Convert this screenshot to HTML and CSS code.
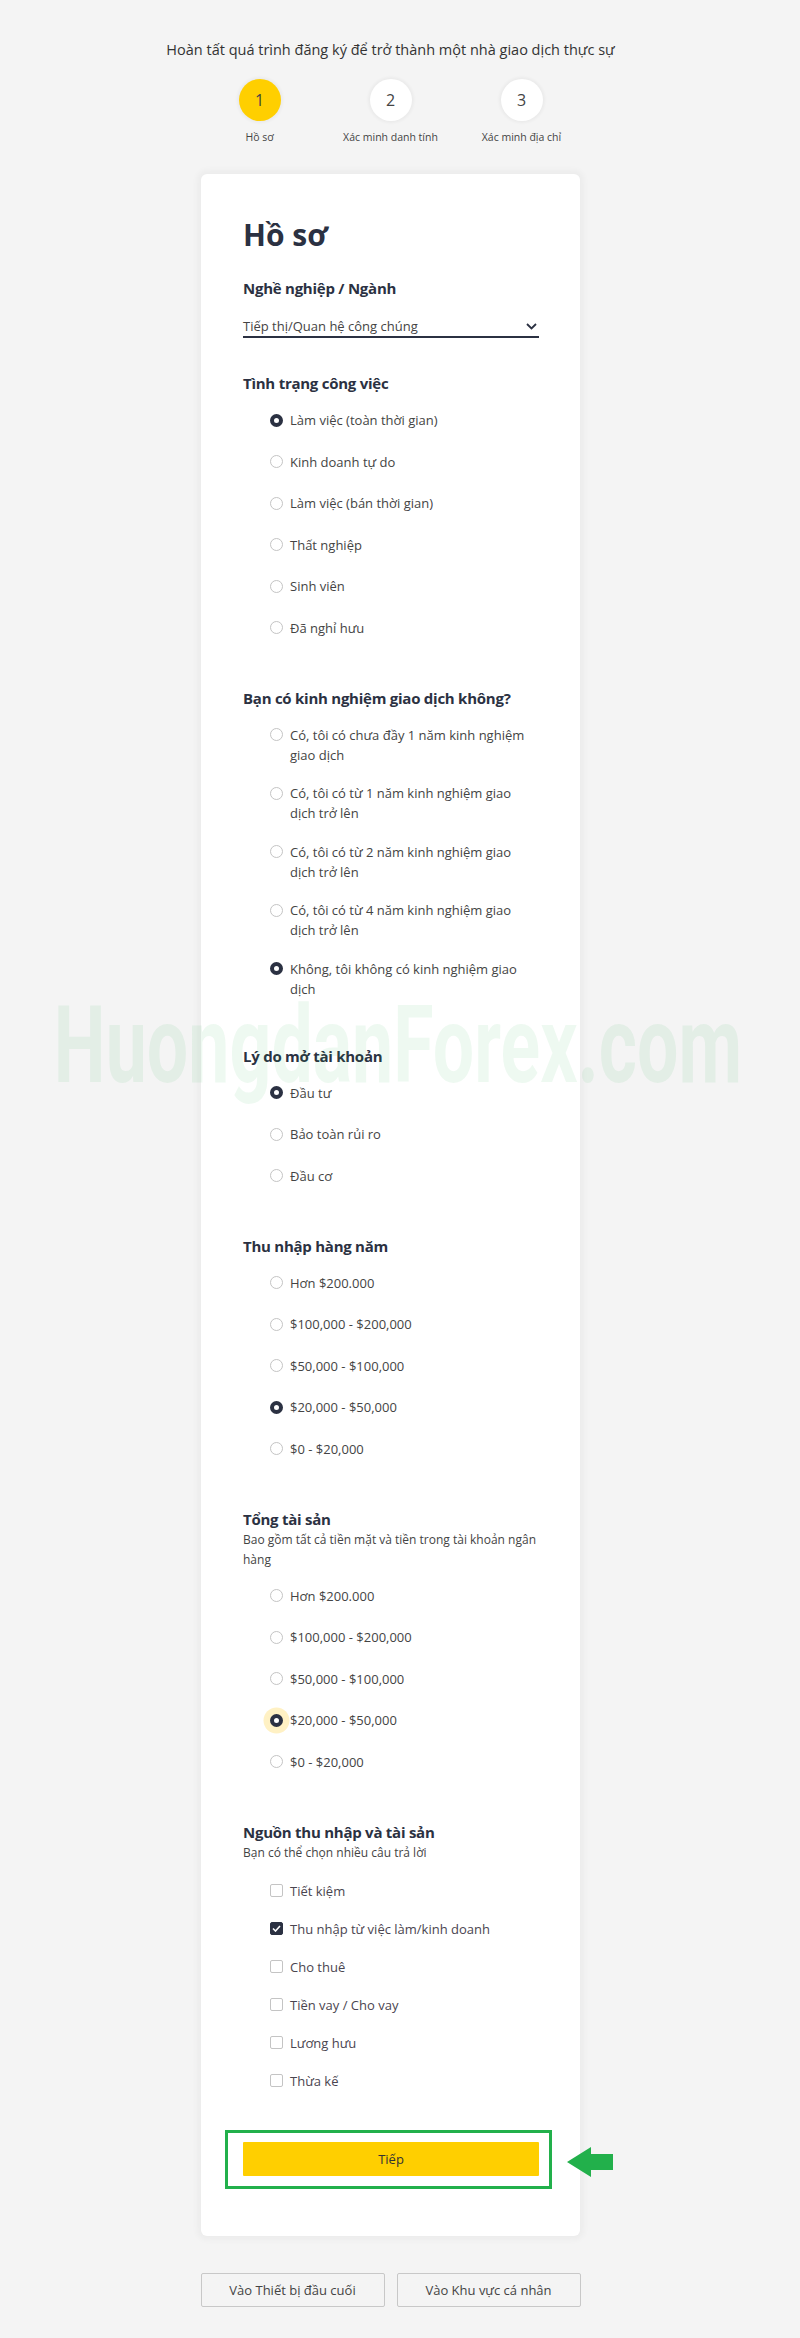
FILE: index.html
```html
<!DOCTYPE html>
<html>
  <head>
    <title>Hồ sơ</title>
    <meta name="viewport" content="width=device-width, initial-scale=1.0">
    <link rel="stylesheet" href="styles.css">
  </head>
  <body>
    <div class="page">
      <p class="intro">Hoàn tất quá trình đăng ký để trở thành một nhà giao dịch thực sự</p>

      <div class="steps">
        <div class="step active">
          <span class="step-num">1</span>
          <span class="step-label">Hồ sơ</span>
        </div>
        <div class="step">
          <span class="step-num">2</span>
          <span class="step-label">Xác minh danh tính</span>
        </div>
        <div class="step">
          <span class="step-num">3</span>
          <span class="step-label">Xác minh địa chỉ</span>
        </div>
      </div>

      <div class="card">
        <h1>Hồ sơ</h1>

        <div class="field first">
          <h2>Nghề nghiệp / Ngành</h2>
          <div class="select">
            <span>Tiếp thị/Quan hệ công chúng</span>
            <svg width="11" height="7" viewBox="0 0 11 7"><polyline points="1,1 5.5,5.5 10,1" fill="none" stroke="#2b3142" stroke-width="1.8"/></svg>
          </div>
        </div>

        <div class="field">
          <h2>Tình trạng công việc</h2>
          <div class="options">
            <div class="option"><span class="radio checked"></span><span>Làm việc (toàn thời gian)</span></div>
            <div class="option"><span class="radio"></span><span>Kinh doanh tự do</span></div>
            <div class="option"><span class="radio"></span><span>Làm việc (bán thời gian)</span></div>
            <div class="option"><span class="radio"></span><span>Thất nghiệp</span></div>
            <div class="option"><span class="radio"></span><span>Sinh viên</span></div>
            <div class="option"><span class="radio"></span><span>Đã nghỉ hưu</span></div>
          </div>
        </div>

        <div class="field">
          <h2>Bạn có kinh nghiệm giao dịch không?</h2>
          <div class="options">
            <div class="option"><span class="radio"></span><span>Có, tôi có chưa đầy 1 năm kinh nghiệm giao dịch</span></div>
            <div class="option"><span class="radio"></span><span>Có, tôi có từ 1 năm kinh nghiệm giao dịch trở lên</span></div>
            <div class="option"><span class="radio"></span><span>Có, tôi có từ 2 năm kinh nghiệm giao dịch trở lên</span></div>
            <div class="option"><span class="radio"></span><span>Có, tôi có từ 4 năm kinh nghiệm giao dịch trở lên</span></div>
            <div class="option"><span class="radio checked"></span><span>Không, tôi không có kinh nghiệm giao dịch</span></div>
          </div>
        </div>

        <div class="field">
          <h2>Lý do mở tài khoản</h2>
          <div class="options">
            <div class="option"><span class="radio checked"></span><span>Đầu tư</span></div>
            <div class="option"><span class="radio"></span><span>Bảo toàn rủi ro</span></div>
            <div class="option"><span class="radio"></span><span>Đầu cơ</span></div>
          </div>
        </div>

        <div class="field">
          <h2>Thu nhập hàng năm</h2>
          <div class="options">
            <div class="option"><span class="radio"></span><span>Hơn $200.000</span></div>
            <div class="option"><span class="radio"></span><span>$100,000 - $200,000</span></div>
            <div class="option"><span class="radio"></span><span>$50,000 - $100,000</span></div>
            <div class="option"><span class="radio checked"></span><span>$20,000 - $50,000</span></div>
            <div class="option"><span class="radio"></span><span>$0 - $20,000</span></div>
          </div>
        </div>

        <div class="field">
          <h2>Tổng tài sản</h2>
          <p class="hint">Bao gồm tất cả tiền mặt và tiền trong tài khoản ngân hàng</p>
          <div class="options">
            <div class="option"><span class="radio"></span><span>Hơn $200.000</span></div>
            <div class="option"><span class="radio"></span><span>$100,000 - $200,000</span></div>
            <div class="option"><span class="radio"></span><span>$50,000 - $100,000</span></div>
            <div class="option"><span class="radio checked focus"></span><span>$20,000 - $50,000</span></div>
            <div class="option"><span class="radio"></span><span>$0 - $20,000</span></div>
          </div>
        </div>

        <div class="field last">
          <h2>Nguồn thu nhập và tài sản</h2>
          <p class="hint">Bạn có thể chọn nhiều câu trả lời</p>
          <div class="checks">
            <div class="check-row"><span class="box"></span><span>Tiết kiệm</span></div>
            <div class="check-row"><span class="box checked"><svg width="9" height="7" viewBox="0 0 9 7"><polyline points="1,3.5 3.5,6 8,1" fill="none" stroke="#fff" stroke-width="1.6"/></svg></span><span>Thu nhập từ việc làm/kinh doanh</span></div>
            <div class="check-row"><span class="box"></span><span>Cho thuê</span></div>
            <div class="check-row"><span class="box"></span><span>Tiền vay / Cho vay</span></div>
            <div class="check-row"><span class="box"></span><span>Lương hưu</span></div>
            <div class="check-row"><span class="box"></span><span>Thừa kế</span></div>
          </div>
        </div>

        <div class="highlight">
          <button class="next">Tiếp</button>
          <svg class="arrow" width="46" height="30" viewBox="0 0 46 30"><polygon points="0,15 24,0 24,7 46,7 46,23 24,23 24,30" fill="#22b04b"/></svg>
        </div>
      </div>

      <div class="links">
        <button class="link-btn">Vào Thiết bị đầu cuối</button>
        <button class="link-btn">Vào Khu vực cá nhân</button>
      </div>

      <div class="watermark">HuongdanForex.com</div>
    </div>
  </body>
</html>
```

FILE: styles.css
```css
body {
  margin: 0;
  padding: 0;
  background-color: #f4f4f4;
  color: #3a3d46;
  font-family: "Segoe UI", "Open Sans", sans-serif;
  overflow-x: hidden;
}
.page {
  position: relative;
  width: 781px;
  height: 2338px;
  padding-top: 40px;
  box-sizing: border-box;
}
.intro {
  margin: 0;
  text-align: center;
  font-size: 14.5px;
  line-height: 20px;
  color: #333;
}
.steps {
  display: flex;
  justify-content: center;
  margin-top: 19px;
}
.step {
  width: 131px;
  display: flex;
  flex-direction: column;
  align-items: center;
}
.step-num {
  width: 42px;
  height: 42px;
  border-radius: 50%;
  background-color: #fff;
  box-shadow: 0 0 3px 2px rgba(0, 0, 0, 0.04);
  display: flex;
  align-items: center;
  justify-content: center;
  font-size: 16px;
  color: #444;
}
.step.active .step-num {
  background-color: #ffcf00;
}
.step-label {
  margin-top: 9px;
  font-size: 10.5px;
  line-height: 14px;
  color: #444;
}
.card {
  width: 379px;
  margin: 30px auto 0;
  background-color: #fff;
  border-radius: 6px;
  box-shadow: 0 0 6px 4px rgba(0, 0, 0, 0.035);
  padding: 41px 41px 47px 42px;
  box-sizing: border-box;
}
h1 {
  margin: 0 0 22px;
  font-size: 30px;
  line-height: 40px;
  font-weight: 700;
  color: #2b3142;
}
h2 {
  margin: 0;
  font-size: 15px;
  line-height: 22px;
  font-weight: 700;
  letter-spacing: -0.25px;
  color: #2b3142;
}
.field {
  margin-bottom: 46px;
}
.field.first {
  margin-bottom: 34px;
}
.field.last {
  margin-bottom: 0;
}
.select {
  margin-top: 17px;
  display: flex;
  align-items: center;
  justify-content: space-between;
  border-bottom: 2px solid #2b3142;
  font-size: 13px;
  line-height: 20px;
  color: #444;
}
.select svg {
  margin-right: 2px;
}
.hint {
  margin: 0;
  font-size: 12px;
  line-height: 20px;
  color: #444;
}
.options {
  margin-top: 16px;
  padding-left: 27px;
  display: flex;
  flex-direction: column;
  gap: 18.5px;
}
.option {
  display: flex;
  align-items: flex-start;
  min-height: 23px;
  font-size: 13px;
  line-height: 20px;
  color: #444;
}
.radio {
  flex: none;
  width: 13px;
  height: 13px;
  margin: 3.5px 7px 0 0;
  border: 1px solid #c4c4c4;
  border-radius: 50%;
  box-sizing: border-box;
  background-color: #fff;
}
.radio.checked {
  border: 4px solid #2b3142;
}
.radio.focus {
  box-shadow: 0 0 0 6.5px #fff1c4;
}
.checks {
  margin-top: 18px;
  padding-left: 27px;
  display: flex;
  flex-direction: column;
  gap: 18px;
}
.check-row {
  display: flex;
  align-items: center;
  min-height: 20px;
  font-size: 13px;
  line-height: 20px;
  color: #4a4550;
}
.box {
  flex: none;
  width: 13px;
  height: 13px;
  margin-right: 7px;
  border: 1px solid #c4c4c4;
  border-radius: 2px;
  box-sizing: border-box;
  display: flex;
  align-items: center;
  justify-content: center;
}
.box.checked {
  background-color: #2b3142;
  border-color: #2b3142;
}
.highlight {
  position: relative;
  margin: 39px -13px 0 -18px;
  padding: 9px 10px 10px 15px;
  border: 3px solid #22b04b;
}
.next {
  display: block;
  width: 100%;
  height: 34px;
  border: none;
  border-radius: 1px;
  background-color: #ffcf00;
  font-family: inherit;
  font-size: 13px;
  color: #333;
}
.arrow {
  position: absolute;
  left: 339px;
  top: 14px;
}
.links {
  width: 380px;
  margin: 37px auto 0;
  display: flex;
  justify-content: space-between;
}
.link-btn {
  width: 184px;
  height: 34px;
  border: 1px solid #c8c8c8;
  border-radius: 2px;
  background-color: #f4f4f4;
  font-family: inherit;
  font-size: 13px;
  color: #444;
}
.watermark {
  position: absolute;
  left: 398px;
  top: 991px;
  white-space: nowrap;
  font-family: Roboto, sans-serif;
  font-weight: 700;
  font-size: 108px;
  line-height: 108px;
  color: rgba(34, 176, 75, 0.08);
  transform: translateX(-50%) scaleX(0.68);
  pointer-events: none;
}
```
